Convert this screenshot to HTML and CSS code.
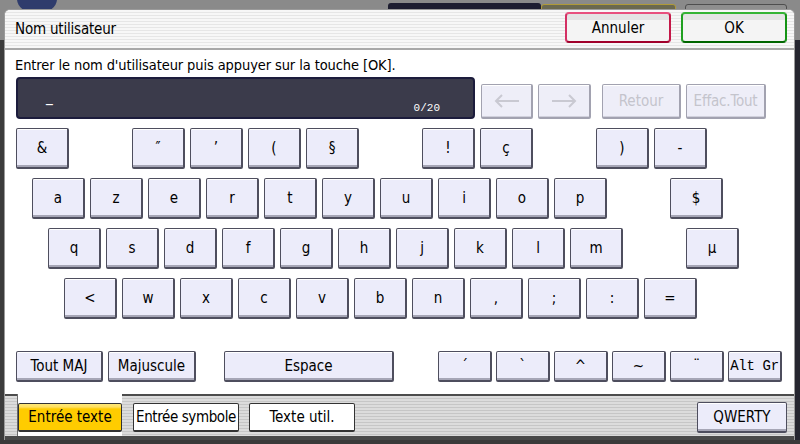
FILE: index.html
```html
<!DOCTYPE html>
<html lang="fr">
<head>
<meta charset="utf-8">
<title>Nom utilisateur</title>
<link rel="stylesheet" href="styles.css">
</head>
<body>
<div class="screen">
  <div class="u-circle"></div>
  <div class="u-tab1"></div>
  <div class="u-tab2"></div>
  <div class="u-tab3"></div>
  <div class="u-left"></div>
  <div class="u-right"></div>

  <div class="dialog">
    <div class="titlebar">
      <span class="title">Nom utilisateur</span>
      <div class="title-btns">
        <button class="tbtn cancel">Annuler</button>
        <button class="tbtn ok">OK</button>
      </div>
    </div>

    <div class="body">
      <p class="hint">Entrer le nom d'utilisateur puis appuyer sur la touche [OK].</p>

      <div class="input-row">
        <div class="field"><span class="cursor">_</span><span class="count">0/20</span></div>
        <div class="key dis arrow"><svg width="26" height="14" viewBox="0 0 26 14"><path d="M25 7H2M8 1L2 7l6 6" fill="none" stroke="#c9c9d2" stroke-width="2"/></svg></div>
        <div class="key dis arrow wide"><svg width="26" height="14" viewBox="0 0 26 14"><path d="M1 7h23M18 1l6 6-6 6" fill="none" stroke="#c9c9d2" stroke-width="2"/></svg></div>
        <div class="key dis retour">Retour</div>
        <div class="key dis effac">Effac.Tout</div>
      </div>

      <div class="krow r1">
        <div class="key">&amp;</div>
        <div class="gap"></div>
        <div class="key">″</div>
        <div class="key">’</div>
        <div class="key">(</div>
        <div class="key">§</div>
        <div class="gap"></div>
        <div class="key">!</div>
        <div class="key">ç</div>
        <div class="gap"></div>
        <div class="key">)</div>
        <div class="key">-</div>
      </div>

      <div class="krow r2">
        <div class="key">a</div>
        <div class="key">z</div>
        <div class="key">e</div>
        <div class="key">r</div>
        <div class="key">t</div>
        <div class="key">y</div>
        <div class="key">u</div>
        <div class="key">i</div>
        <div class="key">o</div>
        <div class="key">p</div>
        <div class="gap"></div>
        <div class="key">$</div>
      </div>

      <div class="krow r3">
        <div class="key">q</div>
        <div class="key">s</div>
        <div class="key">d</div>
        <div class="key">f</div>
        <div class="key">g</div>
        <div class="key">h</div>
        <div class="key">j</div>
        <div class="key">k</div>
        <div class="key">l</div>
        <div class="key">m</div>
        <div class="gap"></div>
        <div class="key">µ</div>
      </div>

      <div class="krow r4">
        <div class="key">&lt;</div>
        <div class="key">w</div>
        <div class="key">x</div>
        <div class="key">c</div>
        <div class="key">v</div>
        <div class="key">b</div>
        <div class="key">n</div>
        <div class="key">,</div>
        <div class="key">;</div>
        <div class="key">:</div>
        <div class="key">=</div>
      </div>

      <div class="brow">
        <div class="key toutmaj">Tout MAJ</div>
        <div class="key majus">Majuscule</div>
        <div class="key espace">Espace</div>
        <div class="key acc first">´</div>
        <div class="key acc">`</div>
        <div class="key acc">^</div>
        <div class="key acc">~</div>
        <div class="key acc">¨</div>
        <div class="key acc altgr">Alt Gr</div>
      </div>
    </div>

    <div class="bottombar">
      <div class="tab"><div class="tbbtn active">Entrée texte</div></div>
      <div class="tbbtn plain sym">Entrée symbole</div>
      <div class="tbbtn plain">Texte util.</div>
      <div class="tbbtn qwerty">QWERTY</div>
    </div>
  </div>
</div>
</body>
</html>
```

FILE: styles.css
```css
* { box-sizing: border-box; margin: 0; padding: 0; }

html, body {
  width: 800px;
  height: 444px;
  overflow: hidden;
}

body {
  background: #8a8a8a;
  font-family: "DejaVu Sans Condensed", "Liberation Sans", sans-serif;
  color: #000;
  white-space: nowrap;
}

.screen {
  position: relative;
  width: 800px;
  height: 444px;
  padding: 9px 5px 0 4px;
  background: linear-gradient(to bottom, #8a8a8a 0, #8a8a8a 440px, #3a3a3a 440px);
}

/* underlying screen pieces, partly covered by the dialog */
.u-circle {
  position: absolute;
  left: 17px;
  top: -16px;
  width: 40px;
  height: 30px;
  border-radius: 50%;
  background: #2f3c6c;
}
.u-tab1 {
  position: absolute;
  left: 388px;
  top: 3px;
  width: 153px;
  height: 10px;
  background: #1d1d30;
  border-radius: 3px 3px 0 0;
}
.u-tab2 {
  position: absolute;
  left: 541px;
  top: 4px;
  width: 135px;
  height: 10px;
  background: #6a6850;
  border: 1px solid #b09a38;
  border-radius: 3px 3px 0 0;
}
.u-tab3 {
  position: absolute;
  left: 685px;
  top: 4px;
  width: 102px;
  height: 10px;
  background: #8e8e8e;
  border: 1px solid #4e4e4e;
  border-radius: 3px 3px 0 0;
}
.u-left {
  position: absolute;
  left: 0;
  top: 40px;
  width: 4px;
  height: 400px;
  background: #3c3c3c;
}
.u-right {
  position: absolute;
  right: 0;
  top: 40px;
  width: 5px;
  height: 400px;
  background: #262630;
}

.dialog {
  position: relative;
  width: 791px;
  height: 431px;
  background: #fff;
  border: 1px solid #9a9a9a;
  border-bottom: none;
  border-radius: 6px 6px 0 0;
  display: flex;
  flex-direction: column;
  overflow: hidden;
}

/* title bar */
.titlebar {
  height: 40px;
  flex: none;
  display: flex;
  align-items: flex-start;
  padding: 2px 7px 0 10px;
  border-bottom: 2px solid #a8a8a8;
  background: repeating-linear-gradient(to bottom, #f7f7f7 0, #f7f7f7 2px, #e6e6e6 2px, #e6e6e6 3px);
}
.title {
  font-size: 15px;
  line-height: 34px;
  letter-spacing: -0.2px;
}
.title-btns {
  margin-left: auto;
  display: flex;
  gap: 10px;
}
.tbtn {
  width: 106px;
  height: 31px;
  border: 2px solid;
  border-radius: 4px;
  font-family: inherit;
  font-size: 15px;
  color: #000;
  background: linear-gradient(to bottom, #e4e4e4 0, #e4e4e4 6px, #f4f4f4 6px);
  padding: 0;
}
.cancel { border-color: #e8507e #c41848 #a0002a #d43064; }
.ok { border-color: #34b434 #149414 #006600 #20a020; }

/* main body */
.body {
  flex: 1;
  display: flex;
  flex-direction: column;
  padding: 5px 0 0 11px;
}
.hint {
  font-size: 14.5px;
  line-height: 20px;
  margin-left: -1px;
  letter-spacing: -0.1px;
}

.input-row {
  margin-top: 2px;
  display: flex;
  align-items: flex-start;
  gap: 5px;
}
.field {
  width: 459px;
  height: 42px;
  margin-right: 1px;
  background: #3b3b4b;
  border: 2px solid #1c1c3c;
  border-radius: 4px;
  display: flex;
  color: #fff;
  padding: 0 33px 3px 28px;
}
.cursor {
  align-self: center;
  font-size: 15px;
  line-height: 15px;
}
.count {
  margin-left: auto;
  align-self: flex-end;
  font-family: "Liberation Mono", monospace;
  font-size: 11px;
  line-height: 12px;
}

.key {
  width: 53px;
  height: 41px;
  flex: none;
  display: flex;
  align-items: center;
  justify-content: center;
  background: #ececfa;
  border: 1px solid #4e4e5e;
  border-bottom-width: 2px;
  border-right-width: 2px;
  border-radius: 2px;
  box-shadow: inset 0 -2px 0 #a6a6b6, inset 0 1px 0 #fff;
  font-size: 15px;
  padding-bottom: 1px;
}
.key.dis {
  height: 35px;
  margin-top: 7px;
  background: #eeeef8;
  border-color: #a2a2b0;
  box-shadow: inset 0 -1px 0 #d0d0dc, inset 0 1px 0 #fff;
  color: #c4c4cc;
}
.arrow { width: 52px; }
.arrow.wide { width: 53px; }
.retour { width: 79px; margin-left: 6px; }
.effac { width: 80px; letter-spacing: -0.2px; }

.krow {
  margin-top: 9px;
  display: flex;
  gap: 5px;
}
.gap { width: 53px; flex: none; }
.r2 { margin-left: 16px; }
.r3 { margin-left: 32px; }
.r4 { margin-left: 48px; }

.brow {
  margin-top: 32px;
  display: flex;
  gap: 4px;
}
.brow .key { height: 31px; }
.toutmaj { width: 87px; }
.majus { width: 88px; margin-left: 1px; }
.espace { width: 170px; margin-left: 24px; }
.acc { width: 54px; }
.acc.first { margin-left: 40px; }
.altgr {
  font-family: "Liberation Mono", monospace;
  font-size: 14px;
  letter-spacing: -0.3px;
}

/* bottom tab bar */
.bottombar {
  height: 46px;
  flex: none;
  display: flex;
  align-items: flex-start;
  padding: 0 7px 0 12px;
  border-top: 2px solid #4c4c4c;
  border-bottom: 4px solid #4a4a4a;
  background: repeating-linear-gradient(to bottom, #dcdcdc 0, #dcdcdc 2px, #c6c6c6 2px, #c6c6c6 3px);
}
.tab {
  margin-top: -2px;
  width: 105px;
  height: 42px;
  background: #fff;
  border-left: 1px solid #6a6a6a;
  padding-top: 9px;
}
.tbbtn {
  height: 29px;
  display: flex;
  align-items: center;
  justify-content: center;
  font-size: 15px;
  border: 1px solid #333;
  border-bottom-width: 2px;
  border-radius: 2px;
  padding-bottom: 1px;
}
.tbbtn.active {
  width: 104px;
  background: linear-gradient(to bottom, #ffe878 0, #ffe060 3px, #ffcc00 5px, #ffcc00);
}
.tbbtn.plain {
  margin-top: 7px;
  width: 106px;
  background: #fff;
}
.sym { margin-left: 11px; letter-spacing: -0.4px; }
.plain + .plain { margin-left: 10px; }
.tbbtn.qwerty {
  margin-top: 6px;
  margin-left: auto;
  width: 90px;
  height: 31px;
  background: #ececfa;
  border-color: #4e4e5e;
  box-shadow: inset 0 -2px 0 #a6a6b6, inset 0 1px 0 #fff;
}
```
